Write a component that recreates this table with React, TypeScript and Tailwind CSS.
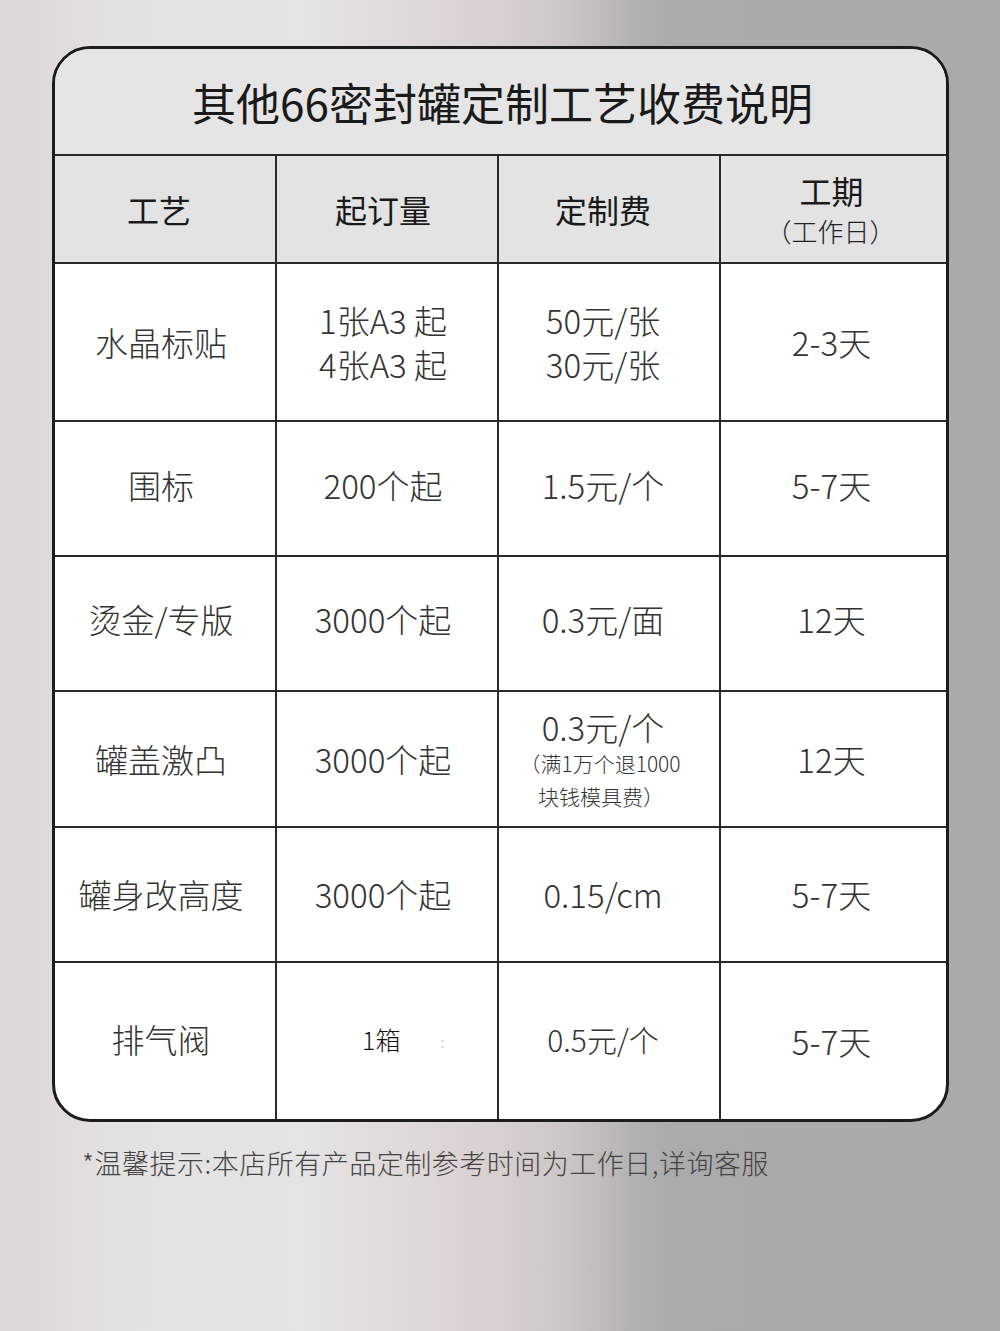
import React from "react";

const font = { fontFamily: '"Noto Sans CJK SC", "Noto Sans", sans-serif' };

type Row = { h: string; shift: string; cells: React.ReactNode[] };

const body = "text-[33px] font-light text-[#333] leading-[44px]";

const rows: Row[] = [
  {
    h: "h-[158px]",
    shift: "",
    cells: [
      <span className={body}>水晶标贴</span>,
      <div className={`${body} text-center`}>
        <div>1张A3 起</div>
        <div>4张A3 起</div>
      </div>,
      <div className={`${body} text-center`}>
        <div>50元/张</div>
        <div>30元/张</div>
      </div>,
      <span className={body}>2-3天</span>,
    ],
  },
  {
    h: "h-[135px]",
    shift: "pb-[8px]",
    cells: [
      <span className={body}>围标</span>,
      <span className={body}>200个起</span>,
      <span className={body}>1.5元/个</span>,
      <span className={body}>5-7天</span>,
    ],
  },
  {
    h: "h-[135px]",
    shift: "pb-[10px]",
    cells: [
      <span className={body}>烫金/专版</span>,
      <span className={body}>3000个起</span>,
      <span className={body}>0.3元/面</span>,
      <span className={body}>12天</span>,
    ],
  },
  {
    h: "h-[136px]",
    shift: "",
    cells: [
      <span className={body}>罐盖激凸</span>,
      <span className={body}>3000个起</span>,
      <div className="flex flex-col items-center pt-[2px]">
        <div className="text-[33px] font-light text-[#333] leading-[40px]">0.3元/个</div>
        <div className="text-[21px] font-light text-[#333] leading-[33px] -ml-[6px]">（满1万个退1000</div>
        <div className="text-[21px] font-light text-[#333] leading-[33px] -ml-[4px]">块钱模具费）</div>
      </div>,
      <span className={body}>12天</span>,
    ],
  },
  {
    h: "h-[135px]",
    shift: "pb-[2px]",
    cells: [
      <span className={body}>罐身改高度</span>,
      <span className={body}>3000个起</span>,
      <span className={body}>0.15/cm</span>,
      <span className={body}>5-7天</span>,
    ],
  },
  {
    h: "h-[156px]",
    shift: "",
    cells: [
      <span className={`${body} -mt-[4px]`}>排气阀</span>,
      <div className="flex items-center pl-[85px] w-full -mt-[4px]">
        <span className="text-[25px] font-light text-[#111] leading-[34px]">1箱</span>
        <span className="text-[14px] text-[#cfcfcf] ml-[40px] mt-[6px]">:</span>
      </div>,
      <span className="text-[30px] font-light text-[#333] leading-[40px] -mt-[4px]">0.5元/个</span>,
      <span className={body}>5-7天</span>,
    ],
  },
];

const pads = ["pr-[8px]", "pr-[8px]", "pr-[12px]", "pr-[4px]"];

export default function App() {
  return (
    <div
      style={font}
      className="w-[1000px] h-[1331px] overflow-hidden bg-[linear-gradient(90deg,#dcd6d6_0%,#e3e2e2_12%,#e4e4e4_30%,#dfd8d8_42%,#d8cfcf_50%,#cbc6c6_57%,#b4b3b3_63%,#ababab_67%,#aaaaaa_100%)] pt-[46px] pl-[52px]"
    >
      <div className="w-[897px] border-[3px] border-[#1c1c1c] rounded-[38px] overflow-hidden bg-white">
        <div className="h-[107px] bg-[#e5e5e5] border-b-2 border-[#2a2a2a] flex items-center justify-center">
          <span className="text-[44px] font-normal text-[#1a1a1a] leading-none ml-[4px]">
            其他66密封罐定制工艺收费说明
          </span>
        </div>
        <div className="grid grid-cols-[222px_222px_222px_1fr] h-[108px] bg-[#e3e3e3] border-b-2 border-[#2a2a2a]">
          <div className="border-r-2 border-[#2a2a2a] flex items-center justify-center pr-[12px] text-[32px] font-normal text-[#1a1a1a]">工艺</div>
          <div className="border-r-2 border-[#2a2a2a] flex items-center justify-center pr-[8px] text-[32px] font-normal text-[#1a1a1a]">起订量</div>
          <div className="border-r-2 border-[#2a2a2a] flex items-center justify-center pr-[12px] text-[32px] font-normal text-[#1a1a1a]">定制费</div>
          <div className="flex flex-col items-center justify-center pt-[2px] pr-[4px]">
            <span className="text-[32px] font-normal text-[#1a1a1a] leading-[42px]">工期</span>
            <span className="text-[26px] font-light text-[#222] leading-[40px] -ml-[2px]">（工作日）</span>
          </div>
        </div>
        {rows.map((r, i) => (
          <div
            key={i}
            className={`grid grid-cols-[222px_222px_222px_1fr] ${r.h} ${i < rows.length - 1 ? "border-b-2 border-[#2a2a2a]" : ""}`}
          >
            {r.cells.map((c, j) => (
              <div
                key={j}
                className={`flex items-center justify-center ${pads[j]} ${r.shift} ${j < 3 ? "border-r-2 border-[#2a2a2a]" : ""}`}
              >
                {c}
              </div>
            ))}
          </div>
        ))}
      </div>
      <div className="mt-[26px] pl-[30px] text-[27px] leading-[30px] font-light text-[#444] tracking-[0.5px]">
        *温馨提示:本店所有产品定制参考时间为工作日,详询客服
      </div>
    </div>
  );
}
